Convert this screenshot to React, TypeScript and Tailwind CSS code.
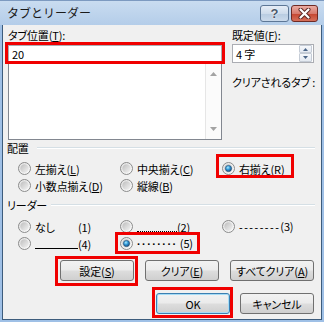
import React from "react";

function Radio({ checked = false }: { checked?: boolean }) {
  return (
    <svg width="13" height="13" viewBox="0 0 13 13" className="shrink-0">
      <defs>
        <linearGradient id="ro" x1="0" y1="0" x2="1" y2="1">
          <stop offset="0" stopColor="#e2e2e2" />
          <stop offset="1" stopColor="#fdfdfd" />
        </linearGradient>
        <linearGradient id="ri" x1="0" y1="0" x2="1" y2="1">
          <stop offset="0" stopColor="#bdbdbd" />
          <stop offset="1" stopColor="#f4f4f4" />
        </linearGradient>
        <radialGradient id="rd" cx="0.4" cy="0.35" r="0.75">
          <stop offset="0" stopColor="#a8ecff" />
          <stop offset="0.45" stopColor="#2f95d6" />
          <stop offset="1" stopColor="#123f6a" />
        </radialGradient>
      </defs>
      <circle cx="6.5" cy="6.5" r="6" fill="url(#ro)" stroke="#8a8b8b" strokeWidth="1" />
      <circle cx="6.5" cy="6.5" r="4.2" fill="url(#ri)" />
      {checked && <circle cx="6.5" cy="6.5" r="3.1" fill="url(#rd)" stroke="#1b4a74" strokeWidth="0.6" />}
    </svg>
  );
}

function Item({ checked = false, children }: { checked?: boolean; children: React.ReactNode }) {
  return (
    <div className="flex items-center gap-[4px] h-[17px] whitespace-nowrap">
      <Radio checked={checked} />
      <span>{children}</span>
    </div>
  );
}

function Btn({ children, className, focused = false }: { children: React.ReactNode; className: string; focused?: boolean }) {
  return (
    <div
      className={
        "h-[21px] rounded-[3px] border flex items-center justify-center whitespace-nowrap bg-[linear-gradient(#f2f2f2_0%,#ebebeb_48%,#dddddd_52%,#cfcfcf_100%)] " +
        (focused ? "border-[#3c7fb1] shadow-[inset_0_0_0_1px_#a6dcf6] " : "border-[#707070] ") +
        className
      }
    >
      {children}
    </div>
  );
}

function Tri({ up, color }: { up: boolean; color: string }) {
  return (
    <svg width="7" height="4" viewBox="0 0 7 4">
      <polygon points={up ? "3.5,0 7,4 0,4" : "0,0 7,0 3.5,4"} fill={color} />
    </svg>
  );
}

function Header({ label, w }: { label: string; w: string }) {
  return (
    <div className="flex items-center h-[14px] pl-[4px] pr-[6px]">
      <span className={w + " shrink-0 whitespace-nowrap"}>{label}</span>
      <div className="flex-1 h-[2px] border-t border-[#d5dfe5] border-b border-b-white" />
    </div>
  );
}

export default function App() {
  return (
    <div className="w-[324px] h-[322px] flex flex-col bg-[#9fc0e6] font-['Noto_Sans_CJK_JP',sans-serif] text-[11px] leading-[14px] text-black select-none">
      {/* title bar */}
      <div className="h-[25px] shrink-0 flex items-start border-t border-[#7d9ac0] bg-[linear-gradient(#c9dcf0,#b4cde9)]">
        <div className="flex-1 pl-[7px] pt-[4px] text-[12px] leading-[16px] text-[#1a1a1a]">タブとリーダー</div>
        <div className="flex gap-[2px] pt-[4px] pr-[6px]">
          <div className="w-[29px] h-[17px] rounded-[3px] border border-[#5d7796] bg-[linear-gradient(#e6eef7,#cddbeb_50%,#b7cbe0_51%,#cbdaeb)] flex items-center justify-center">
            <span className="font-['Liberation_Sans',sans-serif] font-bold text-[13px] leading-[13px] text-[#4a596d] [text-shadow:0_0_1px_#fff,0_0_2px_#fff]">?</span>
          </div>
          <div className="w-[27px] h-[17px] rounded-[3px] border border-[#6e2a24] bg-[linear-gradient(#eaaca3,#d77a6d_50%,#c4442f_51%,#d66f5a)] flex items-center justify-center">
            <svg width="13" height="11" viewBox="0 0 13 11">
              <path d="M2.5 1.5 L10.5 9.5 M10.5 1.5 L2.5 9.5" stroke="#5a2420" strokeWidth="4" strokeLinecap="round" />
              <path d="M2.5 1.5 L10.5 9.5 M10.5 1.5 L2.5 9.5" stroke="#ffffff" strokeWidth="2.2" strokeLinecap="round" />
            </svg>
          </div>
        </div>
      </div>

      {/* frame + body */}
      <div className="flex-1 flex flex-col px-[2px] pb-[2px]">
        <div className="flex-1 flex flex-col bg-[#f0f0f0] border-x border-b border-[#3d5c7c] tracking-[-0.15px] [font-feature-settings:'palt']">
          {/* top section */}
          <div className="flex items-start gap-[10px] pl-[5px] pt-[3px]">
            <div className="w-[214px] flex flex-col">
              <div className="whitespace-nowrap">
                タブ位置(<u>T</u>):
              </div>
              <div className="relative mt-[3px]">
                <div className="h-[16px] border-x border-t border-[#abadb3] bg-white pl-[3px] flex items-center">20</div>
                <span className="absolute -inset-[3px] border-[3px] border-[#f00000]" />
              </div>
              <div className="h-[79px] border border-[#828790] bg-white flex justify-end">
                <div className="w-[16px] h-full border-l border-[#e6e6e6] bg-[#fbfbfb] flex flex-col items-center justify-between pt-[10px] pb-[8px]">
                  <Tri up color="#a3a3a3" />
                  <Tri up={false} color="#a3a3a3" />
                </div>
              </div>
            </div>
            <div className="w-[82px] flex flex-col">
              <div className="whitespace-nowrap">
                既定値(<u>F</u>):
              </div>
              <div className="mt-[2px] h-[19px] border border-[#abadb3] bg-white flex items-center">
                <span className="pl-[3px] flex-1 whitespace-nowrap">4 字</span>
                <div className="w-[13px] h-[17px] mr-[1px] flex flex-col">
                  <div className="h-[8px] border border-[#c5ccd6] rounded-[1px] bg-[linear-gradient(#f6f8fb,#e3e9f1)] flex items-center justify-center">
                    <svg width="5" height="3" viewBox="0 0 5 3"><polygon points="2.5,0 5,3 0,3" fill="#4b6587" /></svg>
                  </div>
                  <div className="h-[9px] border border-[#c5ccd6] rounded-[1px] bg-[linear-gradient(#f6f8fb,#e3e9f1)] flex items-center justify-center">
                    <svg width="5" height="3" viewBox="0 0 5 3"><polygon points="0,0 5,0 2.5,3" fill="#4b6587" /></svg>
                  </div>
                </div>
              </div>
              <div className="mt-[12px] whitespace-nowrap">クリアされるタブ :</div>
            </div>
          </div>

          {/* 配置 */}
          <div className="mt-[1px]">
            <Header label="配置" w="w-[30px]" />
          </div>
          <div className="mt-[5px] pl-[15px] grid grid-cols-[102px_102px_1fr] grid-rows-[17px_17px]">
            <Item>
              左揃え(<u>L</u>)
            </Item>
            <Item>
              中央揃え(<u>C</u>)
            </Item>
            <div className="relative">
              <Item checked>
                右揃え(<u>R</u>)
              </Item>
              <span className="absolute left-[-6px] top-[-6px] w-[78px] h-[24px] border-[3px] border-[#f00000]" />
            </div>
            <Item>
              小数点揃え(<u>D</u>)
            </Item>
            <Item>
              縦線(<u>B</u>)
            </Item>
            <div />
          </div>

          {/* リーダー */}
          <div className="mt-[4px]">
            <Header label="リーダー" w="w-[44px]" />
          </div>
          <div className="mt-[6px] pl-[15px] grid grid-cols-[102px_102px_1fr] grid-rows-[17px_17px]">
            <Item>
              <span className="inline-block w-[43px]">なし</span>(1)
            </Item>
            <Item>
              <span className="inline-block w-[40px] h-[8px] border-b border-dotted border-black" />(2)
            </Item>
            <Item>
              <span className="font-['Liberation_Sans',sans-serif] tracking-[1.5px]">--------</span>(3)
            </Item>
            <Item>
              <span className="inline-block w-[43px] h-[8px] border-b border-black" />(4)
            </Item>
            <div className="relative">
              <Item checked>
                <span className="font-['Liberation_Sans',sans-serif] font-bold tracking-[1.4px]">········</span> (5)
              </Item>
              <span className="absolute left-[-5px] top-[-3px] w-[85px] h-[22px] border-[3px] border-[#f00000]" />
            </div>
            <div />
          </div>

          {/* buttons row 1 */}
          <div className="mt-[8px] flex justify-end gap-[11px] pr-[7px]">
            <div className="relative">
              <Btn className="w-[74px]">
                設定(<u>S</u>)
              </Btn>
              <span className="absolute left-[-5px] right-[-4px] top-[-4px] bottom-[-5px] border-[3px] border-[#f00000]" />
            </div>
            <Btn className="w-[74px]">
              クリア(<u>E</u>)
            </Btn>
            <Btn className="w-[84px]">
              すべてクリア(<u>A</u>)
            </Btn>
          </div>

          {/* buttons row 2 */}
          <div className="mt-[12px] flex justify-end gap-[10px] pr-[7px]">
            <div className="relative">
              <Btn className="w-[74px]" focused>
                OK
              </Btn>
              <span className="absolute left-[-4px] right-[-3px] top-[-6px] bottom-[-4px] border-[3px] border-[#f00000]" />
            </div>
            <Btn className="w-[74px]">キャンセル</Btn>
          </div>
        </div>
      </div>
    </div>
  );
}
